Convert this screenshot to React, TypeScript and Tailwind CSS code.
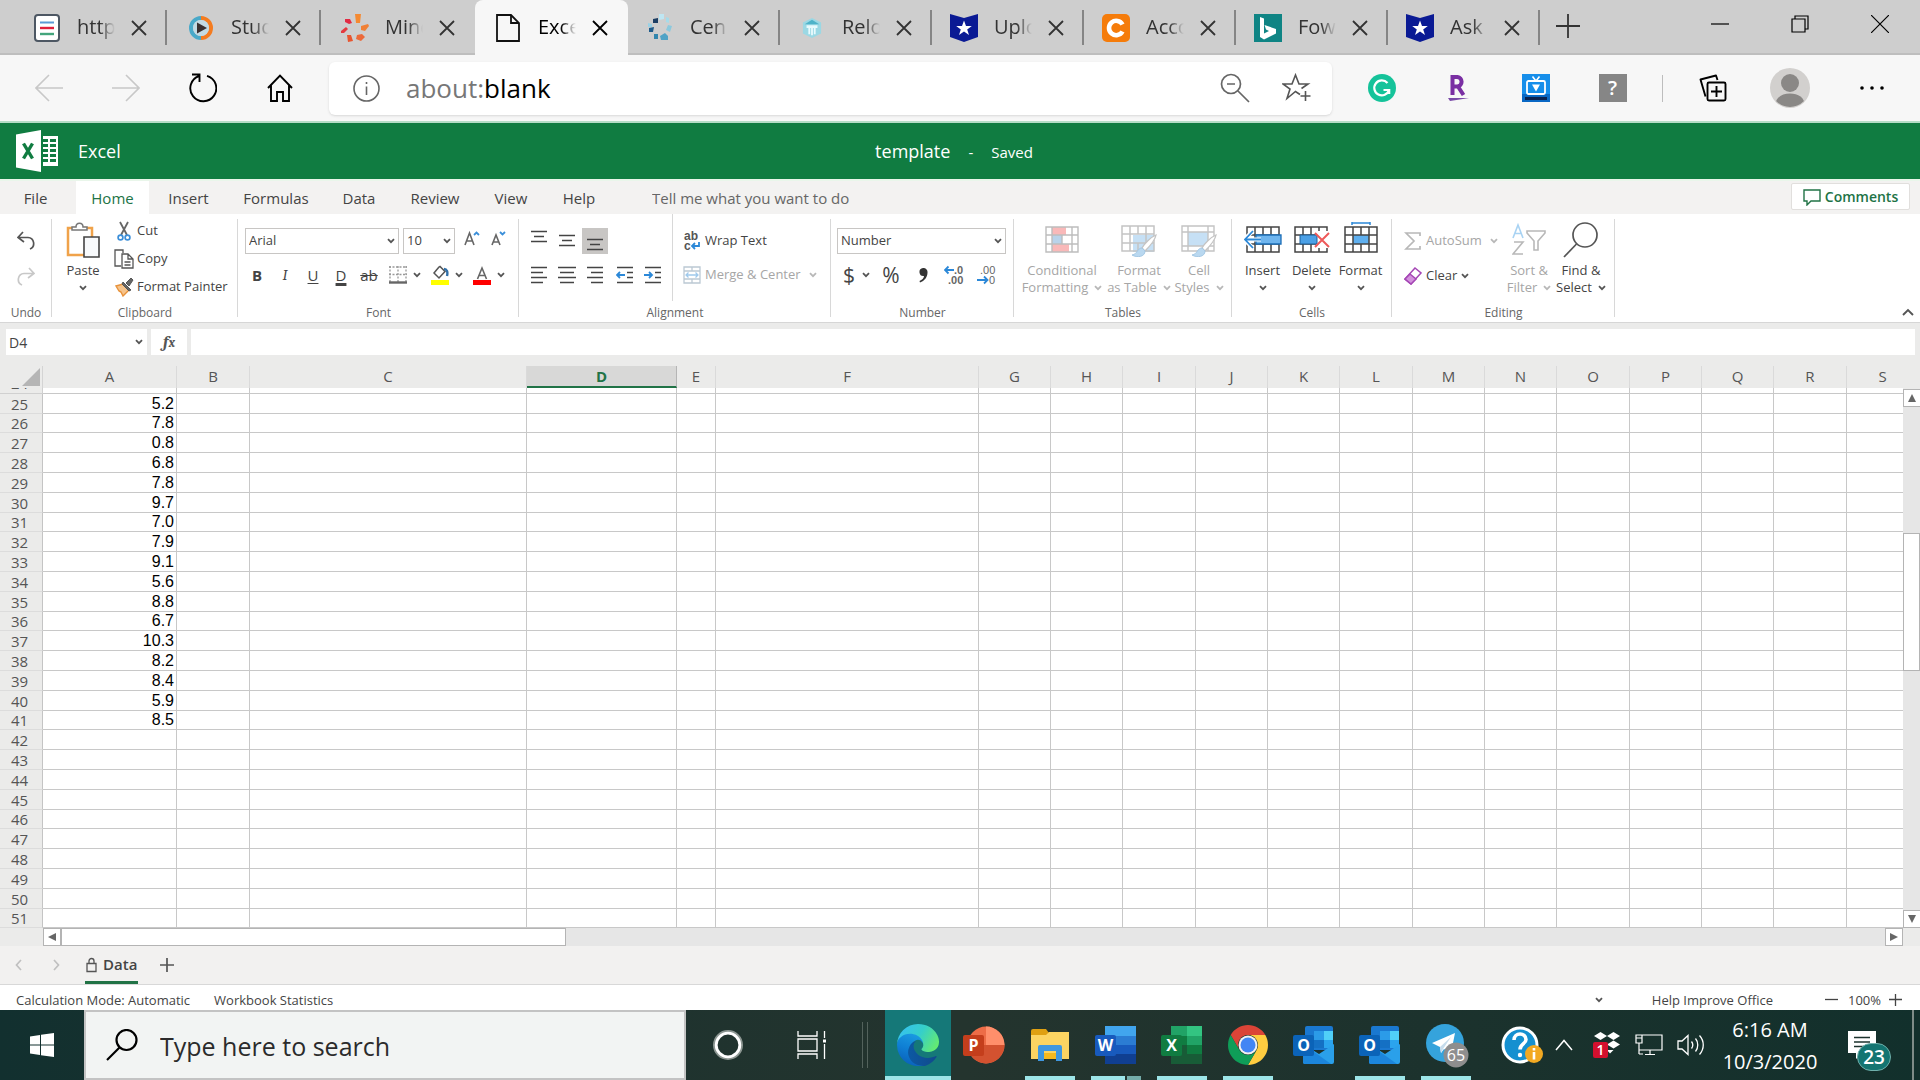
import type { ReactNode } from 'react';
import clsx from 'clsx';

/* ---------- shared bits ---------- */

function Chevron({ color = '#555' }: { color?: string }) {
  return (
    <svg width="8" height="6" viewBox="0 0 8 6" fill="none" stroke={color} strokeWidth="1.8" className="shrink-0">
      <path d="M1 1.2 4 4.2 7 1.2" />
    </svg>
  );
}

function CloseX() {
  return (
    <svg width="16" height="16" viewBox="0 0 16 16" stroke="currentColor" strokeWidth="1.8" fill="none">
      <path d="M1 1 15 15M15 1 1 15" />
    </svg>
  );
}

/* ---------- browser tabs ---------- */

function ShieldStar() {
  return (
    <svg width="28" height="28" viewBox="0 0 28 28">
      <path d="M0 0 14 4 28 0V23L14 28 0 23Z" fill="#0a1a94" />
      <path d="M14 6.500l2 5.500h5.800l-4.600 3.400 1.800 5.600-5-3.400-5 3.400 1.800-5.600L6.200 12H12Z" fill="#fff" />
    </svg>
  );
}

const browserTabs: { title: string; width: string; icon: ReactNode; active?: boolean; plain?: boolean }[] = [
  {
    title: 'http',
    width: 'w-[154px] pl-5',
    icon: (
      <svg width="26" height="28" viewBox="0 0 26 28">
        <rect x="1" y="1" width="24" height="26" rx="3" fill="#fff" stroke="#4d5763" strokeWidth="2" />
        <path d="M6 8.500H20" stroke="#5b9bd5" strokeWidth="2" />
        <path d="M6 14H20" stroke="#e0203c" strokeWidth="2.400" />
        <path d="M6 20H20" stroke="#43a57c" strokeWidth="2.400" />
      </svg>
    ),
  },
  {
    title: 'Stud',
    width: 'w-[154px] pl-5',
    icon: (
      <svg width="26" height="28" viewBox="0 0 26 28">
        <path d="M13 4a10 10 0 0 0 0 20" fill="none" stroke="#49a9c9" strokeWidth="4" />
        <path d="M13 4a10 10 0 0 1 0 20" fill="none" stroke="#f47c20" strokeWidth="4" />
        <circle cx="13" cy="14" r="8" fill="#c3dbe4" />
        <path d="M9 8.500 19 14 9 19.500Z" fill="#3a3030" />
      </svg>
    ),
  },
  {
    title: 'Mind',
    width: 'w-[154px] pl-5',
    plain: true,
    icon: (
      <svg width="28" height="28" viewBox="0 0 28 28">
        <path d="M14 0h6l-1 9h-4Z" fill="#f58a32" />
        <path d="M20 12l7-2 1 2-4 5-4-1Z" fill="#f08035" />
        <path d="M16 21l5-1 3 3-4 4-5-2Z" fill="#ec6a3a" />
        <path d="M6 21h4l2 6-5 1Z" fill="#e8552f" />
        <path d="M0 17l5-4 2 2-4 4H0Z" fill="#e33a40" />
        <path d="M4 5l5 0 2 4-3 1-4-2Z" fill="#e22b44" />
      </svg>
    ),
  },
  {
    title: 'Exce',
    width: 'w-[153px] pl-[19px]',
    active: true,
    plain: true,
    icon: (
      <svg width="24" height="28" viewBox="0 0 24 28" fill="none" stroke="#111" strokeWidth="1.800">
        <path d="M1 1h14l8 8v18H1Z" />
        <path d="M15 1v8h8" />
      </svg>
    ),
  },
  {
    title: 'Cen',
    width: 'w-[152px] pl-[18px]',
    icon: (
      <svg width="26" height="28" viewBox="0 0 26 28">
        <path d="M12 0h5v5l-5 1Z" fill="#bfe6f2" />
        <path d="M19 3l3 1v5l-3-1Z" fill="#a6dbe9" />
        <path d="M6 5l5-1v5H6Z" fill="#1d3e63" />
        <path d="M21 11l4 1-2 6-4-2Z" fill="#8cc9dd" />
        <path d="M1 9l4 1v3H1Z" fill="#9ad2e6" />
        <path d="M2 14l5-1-1 5H2Z" fill="#1f5b8a" />
        <path d="M7 20h4v5H7Z" fill="#3286ad" />
        <path d="M13 22l5-3 3 3v4h-7Z" fill="#4fa3c6" />
      </svg>
    ),
  },
  {
    title: 'Relo',
    width: 'w-[152px] pl-[18px]',
    icon: (
      <svg width="20" height="22" viewBox="0 0 22 24">
        <path d="M11 1 21 6v12l-10 5L1 18V6Z" fill="#9bd8e4" />
        <path d="M11 3 19 8H3Z" fill="#4fb3c9" />
        <path d="M5 9h12v3H5Z" fill="#e9fafd" />
        <path d="M7 12h2v7H7Zm3 0h2v8h-2Zm3 0h2v7h-2Z" fill="#e9fafd" />
      </svg>
    ),
  },
  { title: 'Uplo', width: 'w-[152px] pl-[18px]', icon: <ShieldStar /> },
  {
    title: 'Acco',
    width: 'w-[152px] pl-[18px]',
    icon: (
      <svg width="28" height="28" viewBox="0 0 28 28">
        <rect width="28" height="28" rx="5" fill="#f57c0b" />
        <path d="M20.500 10.500A7.200 7.200 0 1 0 20.500 17.500" fill="none" stroke="#fff" strokeWidth="4.600" />
      </svg>
    ),
  },
  {
    title: 'Fow',
    width: 'w-[152px] pl-[18px]',
    icon: (
      <svg width="28" height="28" viewBox="0 0 28 28">
        <rect width="28" height="28" fill="#0f8484" />
        <path d="M6 3l4 1.500v15L15 17l-3-1.500-1.500-4.500L22 15v4.500L10 25.500 6 23Z" fill="#fff" />
      </svg>
    ),
  },
  { title: 'Ask', width: 'w-[152px] pl-[18px]', icon: <ShieldStar /> },
];

function BrowserTabs() {
  return (
    <div className="flex h-[55px] border-b-2 border-[#bebebe] bg-[#cecece] pl-[13px]">
      {browserTabs.map((tab, i) => (
        <div
          key={i}
          className={clsx(
            'relative flex h-[55px] shrink-0 items-center',
            tab.width,
            tab.active ? 'rounded-t-lg bg-[#f7f7f7] text-black' : 'text-[#333]',
          )}
        >
          <span className="flex w-7 justify-center">{tab.icon}</span>
          <span className="ml-4 w-[38px] overflow-hidden pb-[2px] text-[20px] leading-7 whitespace-nowrap mask-r-from-60%">
            {tab.title}
          </span>
          <button type="button" aria-label={`Close ${tab.title}`} className="ml-4">
            <CloseX />
          </button>
          {!tab.plain && <span className="absolute top-[10px] right-0 h-[35px] w-[2px] bg-[#858585]" />}
        </div>
      ))}
      <button type="button" aria-label="New tab" className="ml-4 flex h-[51px] items-center">
        <svg width="24" height="24" viewBox="0 0 24 24" stroke="#333" strokeWidth="1.800">
          <path d="M12 0V24M0 12H24" />
        </svg>
      </button>
      <div className="ml-auto flex h-[47px]">
        <button type="button" aria-label="Minimize" className="flex w-20 items-center justify-center">
          <svg width="18" height="18" viewBox="0 0 18 18" stroke="#000" strokeWidth="1.200">
            <path d="M0 9H18" />
          </svg>
        </button>
        <button type="button" aria-label="Restore" className="flex w-20 items-center justify-center">
          <svg width="18" height="18" viewBox="0 0 18 18" stroke="#000" strokeWidth="1.200" fill="none">
            <path d="M1 4h13v13H1ZM4 4V1h13v13h-3" />
          </svg>
        </button>
        <button type="button" aria-label="Close window" className="flex w-20 items-center justify-center">
          <svg width="18" height="18" viewBox="0 0 18 18" stroke="#000" strokeWidth="1.200">
            <path d="M0 0 18 18M18 0 0 18" />
          </svg>
        </button>
      </div>
    </div>
  );
}

/* ---------- address bar ---------- */

function ToolButton({ label, children }: { label: string; children: ReactNode }) {
  return (
    <button type="button" aria-label={label} className="flex w-[77px] shrink-0 items-center justify-center">
      {children}
    </button>
  );
}

function AddressBar() {
  return (
    <div className="flex h-[66px] items-center bg-[#f7f7f7] px-[10px]">
      <ToolButton label="Back">
        <svg width="28" height="28" viewBox="0 0 28 28" fill="none" stroke="#c8c8c8" strokeWidth="1.600">
          <path d="M28 14H1M14 1 1 14 14 27" />
        </svg>
      </ToolButton>
      <ToolButton label="Forward">
        <svg width="28" height="28" viewBox="0 0 28 28" fill="none" stroke="#c8c8c8" strokeWidth="1.600">
          <path d="M0 14H27M14 1 27 14 14 27" />
        </svg>
      </ToolButton>
      <ToolButton label="Refresh">
        <svg width="28" height="30" viewBox="0 0 28 30" fill="none" stroke="#000" strokeWidth="1.900">
          <path d="M18 2.800A13 13 0 1 1 10 3M3 1.500H10.500V9" />
        </svg>
      </ToolButton>
      <ToolButton label="Home">
        <svg width="26" height="28" viewBox="0 0 26 28" fill="none" stroke="#000" strokeWidth="1.900">
          <path d="M1 14 13 1.500 25 14M4 11V27H10V18H16V27H22V11" />
        </svg>
      </ToolButton>

      <div className="ml-[11px] flex h-[53px] flex-1 items-center rounded-md bg-white pr-5 pl-6 shadow-sm">
        <svg width="27" height="27" viewBox="0 0 27 27" fill="none" stroke="#666" strokeWidth="1.600">
          <circle cx="13.500" cy="13.500" r="12.500" />
          <path d="M13.500 11.500V20M13.500 7V9" />
        </svg>
        <label htmlFor="url" className="ml-[26px] text-[26px] text-[#777]">
          about:
        </label>
        <input id="url" defaultValue="blank" className="min-w-0 flex-1 text-[26px] text-black outline-none" />
        <button type="button" aria-label="Zoom out">
          <svg width="30" height="30" viewBox="0 0 30 30" fill="none" stroke="#666" strokeWidth="1.700">
            <circle cx="11" cy="11" r="9.500" />
            <path d="M7 11H15M18 18 29 29" />
          </svg>
        </button>
        <button type="button" aria-label="Add to favorites" className="ml-8">
          <svg width="30" height="30" viewBox="0 0 30 30" fill="none" stroke="#555" strokeWidth="1.600">
            <path d="M18 21.500 13.500 18.500 5 25.500 8 16 1 11H10L13.500 2 17 11H26L19.500 15.500" />
            <path d="M23.500 18V28M18.500 23H28.500" />
          </svg>
        </button>
      </div>

      <div className="ml-[11px] flex items-center">
        <ToolButton label="Grammarly">
          <svg width="28" height="28" viewBox="0 0 28 28">
            <circle cx="14" cy="14" r="14" fill="#15c39a" />
            <path d="M19.500 9A7.500 7.500 0 1 0 21 16H15.500M21.200 15V20" fill="none" stroke="#fff" strokeWidth="2.200" />
          </svg>
        </ToolButton>
        <ToolButton label="Rakuten">
          <svg width="24" height="28" viewBox="0 0 24 28">
            <path d="M5.500 21V3H10.500A4.800 4.800 0 0 1 10.500 12.500H6M11 12.500 16.500 21" fill="none" stroke="#7a2fa3" strokeWidth="4" />
            <path d="M1 24H22L16 25 3 27Z" fill="#7a4aa8" />
          </svg>
        </ToolButton>
        <ToolButton label="Video downloader">
          <svg width="28" height="28" viewBox="0 0 28 28">
            <rect width="28" height="28" fill="#168eea" />
            <path d="M0 20H28V28H0Z" fill="#0a68c4" />
            <rect x="5" y="7" width="18" height="13" rx="1.500" fill="none" stroke="#fff" strokeWidth="1.800" />
            <path d="M14 7 10.500 2.500M14 7 17.500 2.500" stroke="#fff" strokeWidth="1.600" />
            <path d="M10 10.500H18L14 17.500Z" fill="#fff" />
            <path d="M3 23H25V26H3Z" fill="#0b2350" />
          </svg>
        </ToolButton>
        <ToolButton label="Extension">
          <span className="flex h-7 w-7 items-center justify-center bg-[#868686] text-[20px] leading-7 font-semibold text-white">
            ?
          </span>
        </ToolButton>
        <span className="mx-[11px] h-[27px] w-px bg-[#bdbdbd]" />
        <ToolButton label="Collections">
          <svg width="28" height="28" viewBox="0 0 28 28" fill="none" stroke="#000" strokeWidth="1.900" strokeLinejoin="round">
            <rect x="8.500" y="8.500" width="18" height="18" rx="1.500" />
            <path d="M17.500 12V23M12 17.500H23M6.500 22.500 1.500 5.500 17 1.500 18.500 6" />
          </svg>
        </ToolButton>
        <ToolButton label="Profile">
          <svg width="40" height="40" viewBox="0 0 40 40">
            <clipPath id="avatar-clip">
              <circle cx="20" cy="20" r="19" />
            </clipPath>
            <circle cx="20" cy="20" r="20" fill="#d2d0ce" />
            <g clipPath="url(#avatar-clip)" fill="#8a8886">
              <circle cx="20" cy="15" r="9" />
              <path d="M5 39C5 29 12 25.500 20 25.500S35 29 35 39Z" />
            </g>
          </svg>
        </ToolButton>
        <span className="w-[5px]" />
        <ToolButton label="Settings and more">
          <svg width="26" height="6" viewBox="0 0 26 6">
            <circle cx="3" cy="3" r="1.800" />
            <circle cx="13" cy="3" r="1.800" />
            <circle cx="23" cy="3" r="1.800" />
          </svg>
        </ToolButton>
      </div>
    </div>
  );
}

/* ---------- Excel header ---------- */

function ExcelHeader() {
  return (
    <header className="grid h-[58px] grid-cols-3 items-center border-t-2 border-[#b5dcc6] bg-[#107c41] text-white">
      <div className="flex items-center gap-5 pl-4">
        <svg width="42" height="42" viewBox="0 0 42 42">
          <path d="M0 4.500 25 0V42L0 37.500Z" fill="#fff" />
          <path d="M27 6H42V36H27Z" fill="#fff" />
          <path
            d="M26 10.500H32M34 10.500H40M26 15.500H32M34 15.500H40M26 20.500H32M34 20.500H40M26 25.500H32M34 25.500H40M26 30.500H32M34 30.500H40"
            stroke="#107c41"
            strokeWidth="3"
          />
          <path d="M7.500 13.500 16.500 28.500M16.500 13.500 7.500 28.500" stroke="#107c41" strokeWidth="3.400" />
        </svg>
        <span className="text-[18px] font-medium">Excel</span>
      </div>
      <div className="flex items-baseline justify-center gap-[18px] pr-3">
        <span className="text-[18px] font-medium">template</span>
        <span className="text-[15px]">-</span>
        <span className="text-[15px] font-medium">Saved</span>
      </div>
    </header>
  );
}

const ribbonTabs = [
  { name: 'File', width: 'w-[71px]' },
  { name: 'Home', width: 'w-[73px]' },
  { name: 'Insert', width: 'w-[79px]' },
  { name: 'Formulas', width: 'w-[96px]' },
  { name: 'Data', width: 'w-[70px]' },
  { name: 'Review', width: 'w-[82px]' },
  { name: 'View', width: 'w-[70px]' },
  { name: 'Help', width: 'w-[66px]' },
];

function RibbonTabs() {
  return (
    <nav className="flex h-[35px] items-stretch border-t-2 border-[#e9f6ea] bg-[#f3f2f1] pr-[10px] text-[15px] text-[#444]">
      {ribbonTabs.map((t, i) => (
        <a
          key={t.name}
          href="#"
          className={clsx(
            'flex items-center justify-center pt-px',
            t.width,
            i === 1 && 'bg-white text-[#217346]',
            i === 0 && 'mr-[5px]',
          )}
        >
          {t.name}
        </a>
      ))}
      <input
        aria-label="Tell me what you want to do"
        placeholder="Tell me what you want to do"
        className="ml-10 w-[260px] pt-px outline-none placeholder:text-[#666]"
      />
      <button
        type="button"
        className="mt-[2px] ml-auto flex h-[27px] w-[119px] items-center justify-center gap-1 rounded-xs border border-[#e1dfdd] bg-white font-semibold text-[#217346]"
      >
        <svg width="18" height="18" viewBox="0 0 18 18" fill="none" stroke="#217346" strokeWidth="1.400">
          <path d="M1 2H17V13H8L4 17V13H1Z" />
        </svg>
        <span className="text-[14px]">Comments</span>
      </button>
    </nav>
  );
}

/* ---------- ribbon ---------- */

function Group({ name, width, children }: { name: string; width: string; children: ReactNode }) {
  return (
    <section aria-label={name} className={clsx('relative flex shrink-0 flex-col', width)}>
      <div className="h-[90px]">{children}</div>
      <div className="text-center text-[12px] leading-[18px] text-[#666]">{name}</div>
      <span className="absolute top-[5px] right-0 h-[98px] w-px bg-[#d8d8d8]" />
    </section>
  );
}

function BigButton({ icon, line1, line2, width, disabled }: { icon: ReactNode; line1: string; line2?: string; width: string; disabled?: boolean }) {
  return (
    <button
      type="button"
      disabled={disabled}
      className={clsx('flex flex-col items-center pt-2 whitespace-nowrap', width, disabled ? 'text-[#a6a6a6]' : 'text-[#444]')}
    >
      <span className="flex h-9 items-center">{icon}</span>
      <span className="mt-1 leading-[17px]">{line1}</span>
      <span className="flex h-[17px] items-center gap-[6px] leading-[17px]">
        {line2}
        <Chevron color={disabled ? '#b8b8b8' : '#555'} />
      </span>
    </button>
  );
}

function ToolSelect({ label, value, width }: { label: string; value: string; width: string }) {
  return (
    <div className={clsx('relative h-[26px]', width)}>
      <select aria-label={label} className="h-full w-full appearance-none border border-[#c8c6c4] bg-white pl-[3px] text-[#444]">
        <option>{value}</option>
      </select>
      <span className="pointer-events-none absolute top-[10px] right-1">
        <Chevron />
      </span>
    </div>
  );
}

function LinesIcon({ d }: { d: string }) {
  return (
    <svg width="18" height="26" viewBox="0 0 18 26" fill="none" stroke="#444" strokeWidth="1.500">
      <path d={d} />
    </svg>
  );
}

function AlignButton({ label, active, children }: { label: string; active?: boolean; children: ReactNode }) {
  return (
    <button type="button" aria-label={label} className={clsx('mx-px flex h-[26px] w-[26px] justify-center', active && 'bg-[#c8c6c4]')}>
      {children}
    </button>
  );
}

function DropIcon({ label, children }: { label: string; children: ReactNode }) {
  return (
    <button type="button" aria-label={label} className="flex h-[26px] w-[42px] items-center gap-[6px]">
      {children}
      <Chevron />
    </button>
  );
}

function SheetGrid({ stroke }: { stroke: string }) {
  return <path d="M1 1H33V26H1ZM1 9H33M1 18H33M9 1V26M17 1V9M17 18V26M25 1V26" fill="none" stroke={stroke} strokeWidth="1.500" />;
}

function Brush() {
  return (
    <>
      <path d="M35 10C30 12 23 19 21 23L24 26C28 22 34 16 35 10Z" fill="#fff" stroke="#c4c4c4" strokeWidth="1.300" />
      <path d="M21 23C16 23 17 29 11 30 16 33 24 32 24 26Z" fill="#b9d8f0" stroke="#a5c8e4" />
    </>
  );
}

function Ribbon() {
  return (
    <div className="flex h-[109px] border-b border-[#d6d6d6] bg-white text-[13px] text-[#444]">
      <Group name="Undo" width="w-[52px]">
        <div className="flex flex-col items-center gap-4 pt-[17px]">
          <button type="button" aria-label="Undo">
            <svg width="18" height="20" viewBox="0 0 18 20" fill="none" stroke="#555" strokeWidth="1.700">
              <path d="M6 1 1 6.500 7 11M1 6.500H11A6 6 0 0 1 13 18" />
            </svg>
          </button>
          <button type="button" aria-label="Redo" disabled>
            <svg width="18" height="20" viewBox="0 0 18 20" fill="none" stroke="#c8c8c8" strokeWidth="1.700">
              <path d="M12 1 17 6.500 11 11M17 6.500H7A6 6 0 0 0 5 18" />
            </svg>
          </button>
        </div>
      </Group>

      <Group name="Clipboard" width="w-[186px]">
        <div className="flex">
          <BigButton
            width="w-[54px] ml-1"
            line1="Paste"
            icon={
              <svg width="34" height="36" viewBox="0 0 34 36" fill="none">
                <path d="M2 6H26V33H2Z" stroke="#f0a24a" strokeWidth="2.500" />
                <path d="M4 8H24V31H4Z" fill="#fff" />
                <path d="M6 8V5H10C10 0 17 0 17 5H21V8Z" fill="#fff" stroke="#777" strokeWidth="1.500" />
                <path d="M18 15H33V35H18Z" fill="#f8fafc" stroke="#444" strokeWidth="1.600" />
              </svg>
            }
          />
          <div className="ml-1 flex flex-col pt-[3px]">
            <button type="button" className="flex h-7 items-center gap-[3px]">
              <svg width="20" height="20" viewBox="0 0 20 20" fill="none">
                <path d="M6 1 13 14M14 1 7 14" stroke="#666" strokeWidth="1.800" />
                <circle cx="6.500" cy="16.500" r="2.400" stroke="#3c8fd9" strokeWidth="1.700" />
                <circle cx="13.500" cy="16.500" r="2.400" stroke="#3c8fd9" strokeWidth="1.700" />
              </svg>
              Cut
            </button>
            <button type="button" className="flex h-7 items-center gap-[3px]">
              <svg width="20" height="20" viewBox="0 0 20 20" fill="none" stroke="#555" strokeWidth="1.300">
                <path d="M7 17H1V1H9V4" />
                <path d="M8 5H14L19 10V19H8ZM14 5V10H19M10.500 13H16.500M10.500 16H16.500" fill="#fff" />
              </svg>
              Copy
            </button>
            <button type="button" className="flex h-7 items-center gap-[3px] whitespace-nowrap">
              <svg width="20" height="20" viewBox="0 0 20 20">
                <path d="M2 9 9 7 15 13 9 19 7 15 5 14Z" fill="#f6c48c" stroke="#e8923a" strokeWidth="1.400" />
                <path d="M9 5 17 13 15 14 8 7ZM12 6 17 1 19 3 15 9Z" fill="#666" stroke="#555" />
              </svg>
              Format Painter
            </button>
          </div>
        </div>
      </Group>

      <Group name="Font" width="w-[281px]">
        <div className="flex gap-1 pt-[14px] pl-[7px]">
          <ToolSelect label="Font name" value="Arial" width="w-[154px]" />
          <ToolSelect label="Font size" value="10" width="w-[52px]" />
          <button type="button" aria-label="Grow font" className="ml-[5px] flex">
            <svg width="17" height="20" viewBox="0 0 17 20" fill="none">
              <path d="M1 17 5.500 5 10 17M2.500 13H8.500" stroke="#666" strokeWidth="1.600" />
              <path d="M10 7 12.500 4.500 15 7" stroke="#3c8fd9" strokeWidth="1.800" />
            </svg>
          </button>
          <button type="button" aria-label="Shrink font" className="ml-[5px] flex">
            <svg width="17" height="20" viewBox="0 0 17 20" fill="none">
              <path d="M2 17 6 7 10 17M3.500 14H8.500" stroke="#666" strokeWidth="1.600" />
              <path d="M10 4 12.500 6.500 15 4" stroke="#3c8fd9" strokeWidth="1.800" />
            </svg>
          </button>
        </div>
        <div className="mt-2 flex items-center pl-[5px] text-[15px]">
          <button type="button" className="w-7 font-bold">B</button>
          <button type="button" className="w-7 font-serif italic">I</button>
          <button type="button" className="w-7 underline underline-offset-2">U</button>
          <button type="button" className="w-7 underline decoration-[3px] underline-offset-2">D</button>
          <button type="button" className="mr-[6px] w-7 line-through">ab</button>
          <DropIcon label="Borders">
            <svg width="18" height="18" viewBox="0 0 18 18" fill="none">
              <path d="M1 0V16M9 0V16M17 0V16M0 1H18M0 8.500H18" stroke="#999" strokeWidth="1.300" strokeDasharray="2 1.500" />
              <path d="M0 16.500H18" stroke="#666" strokeWidth="2.400" />
            </svg>
          </DropIcon>
          <DropIcon label="Fill color">
            <svg width="18" height="20" viewBox="0 0 18 20" fill="none">
              <path d="M8 2 3 8 8 13 14 6.500 9 1.500Z" fill="#fff" stroke="#555" strokeWidth="1.500" />
              <path d="M13 4C16 4 17 7 16 11" stroke="#2f6fa8" strokeWidth="2.400" />
              <path d="M0 15H18V20H0Z" fill="#ff0" />
            </svg>
          </DropIcon>
          <DropIcon label="Font color">
            <svg width="18" height="20" viewBox="0 0 18 20" fill="none">
              <path d="M4.500 14 9 3 13.500 14M6 10.500H12" stroke="#666" strokeWidth="1.600" />
              <path d="M0 15H18V20H0Z" fill="#f00" />
            </svg>
          </DropIcon>
        </div>
      </Group>

      <Group name="Alignment" width="w-[312px]">
        <div className="flex">
          <div className="h-[87px] w-[154px] border-r border-[#d8d8d8] pt-[14px] pl-[6px]">
            <div className="flex">
              <AlignButton label="Top align">
                <LinesIcon d="M1 3.500H17M4 8.500H14M1 13.500H17" />
              </AlignButton>
              <AlignButton label="Middle align">
                <LinesIcon d="M1 7.500H17M4 12.500H14M1 17.500H17" />
              </AlignButton>
              <AlignButton label="Bottom align" active>
                <LinesIcon d="M1 11.500H17M4 16.500H14M1 21.500H17" />
              </AlignButton>
            </div>
            <div className="mt-2 flex">
              <AlignButton label="Align left">
                <LinesIcon d="M1 5.500H17M1 10.500H13M1 15.500H17M1 20.500H13" />
              </AlignButton>
              <AlignButton label="Center">
                <LinesIcon d="M0 5.500H18M2 10.500H16M0 15.500H18M2 20.500H16" />
              </AlignButton>
              <AlignButton label="Align right">
                <LinesIcon d="M1 5.500H17M5 10.500H17M1 15.500H17M5 20.500H17" />
              </AlignButton>
              <span className="w-[2px]" />
              <AlignButton label="Decrease indent">
                <svg width="18" height="26" viewBox="0 0 18 26" fill="none" strokeWidth="1.500">
                  <path d="M1 5.500H17M11 10.500H17M11 15.500H17M1 20.500H17" stroke="#444" />
                  <path d="M9 13H1M4 10 1 13 4 16" stroke="#2b88d8" strokeWidth="1.800" />
                </svg>
              </AlignButton>
              <AlignButton label="Increase indent">
                <svg width="18" height="26" viewBox="0 0 18 26" fill="none" strokeWidth="1.500">
                  <path d="M1 5.500H17M11 10.500H17M11 15.500H17M1 20.500H17" stroke="#444" />
                  <path d="M0 13H8M5 10 8 13 5 16" stroke="#2b88d8" strokeWidth="1.800" />
                </svg>
              </AlignButton>
            </div>
          </div>
          <div className="flex flex-col gap-2 pt-[14px] pl-[10px]">
            <button type="button" className="flex h-[26px] items-center gap-1">
              <svg width="18" height="20" viewBox="0 0 18 20" fill="none" className="font-['Liberation_Sans',sans-serif]">
                <text x="1" y="9" fontSize="12" fontWeight="700" fill="#555">ab</text>
                <text x="1" y="19" fontSize="12" fontWeight="700" fill="#555">c</text>
                <path d="M16 11V15H9M12 12 9 15 12 18" stroke="#2b88d8" strokeWidth="1.800" />
              </svg>
              Wrap Text
            </button>
            <button type="button" disabled className="flex h-[26px] items-center gap-1 whitespace-nowrap text-[#a6a6a6]">
              <svg width="18" height="18" viewBox="0 0 18 18" fill="none" stroke="#bcc9d4" strokeWidth="1.300">
                <path d="M1 1H17V17H1ZM1 5H17M1 13H17M9 1V5M9 13V17" />
                <path d="M3 9H15M5.500 6.500 3 9 5.500 11.500M12.500 6.500 15 9 12.500 11.500" stroke="#9fc9ec" />
              </svg>
              Merge &amp; Center
              <span className="ml-1">
                <Chevron color="#b8b8b8" />
              </span>
            </button>
          </div>
        </div>
      </Group>

      <Group name="Number" width="w-[183px]">
        <div className="pt-[14px] pl-[6px]">
          <ToolSelect label="Number format" value="Number" width="w-[169px]" />
          <div className="mt-2 flex h-[26px] items-center text-[21px] leading-[26px]">
            <button type="button" aria-label="Accounting format" className="flex w-10 items-center gap-[7px] pl-[6px]">
              $ <Chevron />
            </button>
            <button type="button" className="w-[28px]">%</button>
            <button type="button" aria-label="Comma style" className="flex w-9 justify-center">
              <svg width="10" height="18" viewBox="0 0 10 18">
                <path d="M5 2A4 4 0 0 1 9.500 6.500C9.500 11 6.500 15 2 16.500L1.500 15C4 14 6 12 6 10A4 4 0 1 1 5 2Z" fill="#333" />
              </svg>
            </button>
            <button type="button" aria-label="Increase decimal" className="flex w-[26px] justify-center">
              <svg width="20" height="20" viewBox="0 0 20 20" fill="none" className="font-['Liberation_Sans',sans-serif]">
                <text x="10" y="9" fontSize="11" fontWeight="700" fill="#666">.0</text>
                <text x="4" y="19" fontSize="11" fontWeight="700" fill="#666">.00</text>
                <path d="M10 5H1M4.500 1.500 1 5 4.500 8.500" stroke="#2b88d8" strokeWidth="1.800" />
              </svg>
            </button>
            <button type="button" aria-label="Decrease decimal" className="ml-[6px] flex w-[26px] justify-center">
              <svg width="20" height="20" viewBox="0 0 20 20" fill="none" className="font-['Liberation_Sans',sans-serif]">
                <text x="4" y="9" fontSize="11" fill="#666">.00</text>
                <text x="13" y="19" fontSize="11" fill="#666">0</text>
                <path d="M1 15H11M8 11.500 11.500 15 8 18.500" stroke="#2b88d8" strokeWidth="1.800" />
              </svg>
            </button>
          </div>
        </div>
      </Group>

      <Group name="Tables" width="w-[218px]">
        <div className="flex pl-[7px]">
          <BigButton
            width="w-[82px]"
            line1="Conditional"
            line2="Formatting"
            disabled
            icon={
              <svg width="34" height="28" viewBox="0 0 34 28">
                <path d="M7 1H21V9H7ZM7 18H24V26H7Z" fill="#f9b9b9" />
                <path d="M7 9H17V18H7Z" fill="#b9d3ea" />
                <path d="M1 1H33V26H1ZM1 9H33M1 18H33M7 1V26M27 1V26M17 9V18" fill="none" stroke="#bdbdbd" strokeWidth="1.400" />
              </svg>
            }
          />
          <BigButton
            width="w-[66px] ml-[3px]"
            line1="Format"
            line2="as Table"
            disabled
            icon={
              <svg width="36" height="34" viewBox="0 -2 36 34">
                <path d="M12 10H33V27H12Z" fill="#c6e0f5" />
                <SheetGrid stroke="#c4c4c4" />
                <Brush />
              </svg>
            }
          />
          <BigButton
            width="w-[50px] ml-[2px]"
            line1="Cell"
            line2="Styles"
            disabled
            icon={
              <svg width="36" height="34" viewBox="0 -2 36 34">
                <path d="M7 7H27V21H7Z" fill="#c6e0f5" />
                <path d="M1 1H33V26H1ZM1 7H33M7 1V26M27 1V26M1 21H33" fill="none" stroke="#c4c4c4" strokeWidth="1.400" />
                <Brush />
              </svg>
            }
          />
        </div>
      </Group>

      <Group name="Cells" width="w-[160px]">
        <div className="flex pl-[6px]">
          <BigButton
            width="w-[49px]"
            line1="Insert"
            icon={
              <svg width="38" height="28" viewBox="0 0 38 28">
                <g transform="translate(2 0)">
                  <SheetGrid stroke="#444" />
                </g>
                <path d="M12 9H37V18H12Z" fill="#6fb5ee" stroke="#1d6fb8" strokeWidth="1.300" />
                <path d="M0 13.500H17M9 5 0 13.500 9 22" fill="none" stroke="#fff" strokeWidth="4" />
                <path d="M1 13.500H17M9 5 1 13.500 9 22" fill="none" stroke="#2b88d8" strokeWidth="1.800" />
              </svg>
            }
          />
          <BigButton
            width="w-[49px]"
            line1="Delete"
            icon={
              <svg width="36" height="28" viewBox="0 0 36 28">
                <SheetGrid stroke="#444" />
                <path d="M22 5H34V22H22Z" fill="#fff" />
                <path d="M6 9H23V18H6Z" fill="#4ba0e6" stroke="#1d5f98" />
                <path d="M21 7 35 21M35 7 21 21" stroke="#ee5a5a" strokeWidth="2" />
              </svg>
            }
          />
          <BigButton
            width="w-[49px]"
            line1="Format"
            icon={
              <svg width="34" height="36" viewBox="0 1 34 36">
                <path d="M8 2H26M8 0V4M26 0V4" stroke="#2b88d8" strokeWidth="1.500" />
                <g transform="translate(0 5)">
                  <path d="M9 9H25V18H9Z" fill="#5fb0f0" />
                  <SheetGrid stroke="#444" />
                </g>
              </svg>
            }
          />
        </div>
      </Group>

      <Group name="Editing" width="w-[223px]">
        <div className="flex">
          <div className="flex w-[111px] flex-col gap-[9px] pt-[14px] pl-3">
            <button type="button" disabled className="flex h-[26px] items-center gap-1 text-[#a6a6a6]">
              <svg width="18" height="18" viewBox="0 0 18 18" fill="none" stroke="#b8b8b8" strokeWidth="1.700">
                <path d="M16 4V1H2L10 9 2 17H16V14" />
              </svg>
              AutoSum
              <span className="ml-1">
                <Chevron color="#b8b8b8" />
              </span>
            </button>
            <button type="button" className="flex h-[26px] items-center gap-1">
              <svg width="18" height="18" viewBox="0 0 18 18" stroke="#a546b5" strokeWidth="1.500">
                <path d="M11 1 17 6 7 17 1 12Z" fill="#fff" />
                <path d="M6 7 12 12 7 17 1 12Z" fill="#d391dd" />
              </svg>
              Clear
              <Chevron />
            </button>
          </div>
          <BigButton
            width="w-[52px]"
            line1="Sort &"
            line2="Filter"
            disabled
            icon={
              <svg width="34" height="34" viewBox="0 0 34 34" fill="none" strokeWidth="1.600">
                <path d="M1 15 6 2 11 15M3 10.500H9" stroke="#a9d3f3" />
                <path d="M2 19H11L1 31H11" stroke="#b8b8b8" />
                <path d="M15 8H33V10L26 18V27H22V18L15 10Z" stroke="#b8b8b8" />
              </svg>
            }
          />
          <BigButton
            width="w-[52px]"
            line1="Find &"
            line2="Select"
            icon={
              <svg width="36" height="36" viewBox="0 0 36 36" fill="none" stroke="#555" strokeWidth="1.700">
                <circle cx="22" cy="13" r="12" />
                <path d="M13.500 22 1 35" />
              </svg>
            }
          />
        </div>
      </Group>

      <button type="button" aria-label="Collapse ribbon" className="mr-[6px] mb-[6px] ml-auto self-end">
        <svg width="12" height="8" viewBox="0 0 12 8" fill="none" stroke="#555" strokeWidth="1.900">
          <path d="M1 7 6 2 11 7" />
        </svg>
      </button>
    </div>
  );
}

/* ---------- formula bar ---------- */

function FormulaBar() {
  return (
    <div className="flex h-[43px] items-start gap-1 bg-[#ebebea] pt-[6px] pr-[5px] pl-[6px] text-[14px] text-[#444]">
      <div className="flex h-[26px] w-[141px] items-center bg-white pr-1 pl-[3px]">
        <input aria-label="Name box" defaultValue="D4" className="min-w-0 flex-1 outline-none" />
        <Chevron />
      </div>
      <button type="button" aria-label="Insert function" className="h-[26px] w-9 bg-white font-serif text-[17px] leading-6 font-bold text-[#555] italic">
        f<span className="text-[13px]">x</span>
      </button>
      <input aria-label="Formula" className="h-[26px] min-w-0 flex-1 bg-white outline-none" />
    </div>
  );
}

/* ---------- sheet ---------- */

const columns = [
  { name: 'A', width: 'w-[134px]' },
  { name: 'B', width: 'w-[73px]' },
  { name: 'C', width: 'w-[277px]' },
  { name: 'D', width: 'w-[150px]' },
  { name: 'E', width: 'w-[39px]' },
  { name: 'F', width: 'w-[263px]' },
  { name: 'G', width: 'w-[72px]' },
  { name: 'H', width: 'w-[72px]' },
  { name: 'I', width: 'w-[73px]' },
  { name: 'J', width: 'w-[72px]' },
  { name: 'K', width: 'w-[72px]' },
  { name: 'L', width: 'w-[73px]' },
  { name: 'M', width: 'w-[72px]' },
  { name: 'N', width: 'w-[72px]' },
  { name: 'O', width: 'w-[73px]' },
  { name: 'P', width: 'w-[72px]' },
  { name: 'Q', width: 'w-[72px]' },
  { name: 'R', width: 'w-[73px]' },
  { name: 'S', width: 'w-[72px]' },
];

const dataA = ['5.2', '7.8', '0.8', '6.8', '7.8', '9.7', '7.0', '7.9', '9.1', '5.6', '8.8', '6.7', '10.3', '8.2', '8.4', '5.9', '8.5'];
const rows = Array.from({ length: 27 }, (_, i) => ({ n: 25 + i, value: dataA[i] ?? '' }));

function ScrollButton({ label, d }: { label: string; d: string }) {
  return (
    <button type="button" aria-label={label} className="flex h-[18px] w-[18px] shrink-0 items-center justify-center border border-[#b4b4b4] bg-white">
      <svg width="10" height="10" viewBox="0 0 10 10" fill="#666">
        <path d={d} />
      </svg>
    </button>
  );
}

function Sheet() {
  return (
    <div className="bg-[#ebebea]">
      <div className="flex">
        <div className="min-w-0 flex-1 overflow-hidden">
          <table className="w-max table-fixed border-separate border-spacing-0">
            <thead>
              <tr className="h-[22px] text-[15px] leading-[18px] text-[#555]">
                <th className="w-[43px] border-r border-[#d4d4d4] p-0" aria-label="Select all">
                  <svg width="18" height="18" viewBox="0 0 18 18" className="ml-[22px]">
                    <path d="M18 0V18H0Z" fill="#b5b5b5" />
                  </svg>
                </th>
                {columns.map((c) => (
                  <th
                    key={c.name}
                    scope="col"
                    className={clsx(
                      'border-r p-0',
                      c.width,
                      c.name === 'D'
                        ? 'border-b-2 border-r-[#b5b5b5] border-b-[#217346] bg-[#d8d8d7] font-bold text-[#217346]'
                        : 'border-[#dadada] pb-[2px] font-normal',
                    )}
                  >
                    {c.name}
                  </th>
                ))}
              </tr>
            </thead>
            <tbody className="bg-white">
              <tr>
                <th scope="row" className="border-r border-b border-[#d0d0d0] bg-[#ebebea] p-0 font-normal text-[#555]">
                  <div className="flex h-[5px] items-end justify-center overflow-hidden pr-[3px] text-[15px] leading-[20px]">24</div>
                </th>
                {columns.map((c) => (
                  <td key={c.name} className="border-r border-b border-[#c8c8c8] p-0" />
                ))}
              </tr>
              {rows.map((r) => (
                <tr key={r.n} className={r.n % 5 === 1 ? 'h-[19px]' : 'h-[20px]'}>
                  <th
                    scope="row"
                    className="border-r border-b border-r-[#c4c4c4] border-b-[#dcdcdc] bg-[#ebebea] p-0 pr-[3px] text-[15px] leading-[18px] font-normal text-[#555]"
                  >
                    {r.n}
                  </th>
                  {columns.map((c) => (
                    <td
                      key={c.name}
                      className="border-r border-b border-[#c8c8c8] p-0 pr-[2px] text-right font-['Liberation_Sans',sans-serif] text-[16px] leading-[18px] text-black"
                    >
                      {c.name === 'A' ? r.value : null}
                    </td>
                  ))}
                </tr>
              ))}
            </tbody>
          </table>
        </div>
        <div className="mt-[23px] flex w-[17px] shrink-0 flex-col overflow-hidden bg-[#e6e6e6]">
          <ScrollButton label="Scroll up" d="M5 1 9 9H1Z" />
          <div className="mt-[126px] h-[138px] border border-[#b4b4b4] bg-white" />
          <div className="mt-auto">
            <ScrollButton label="Scroll down" d="M1 1H9L5 9Z" />
          </div>
        </div>
      </div>
      <div className="mr-[17px] ml-[43px] flex h-[18px] bg-[#e6e6e6]">
        <ScrollButton label="Scroll left" d="M9 1V9L1 5Z" />
        <div className="w-[505px] border border-[#b4b4b4] bg-white" />
        <div className="ml-auto">
          <ScrollButton label="Scroll right" d="M1 1 9 5 1 9Z" />
        </div>
      </div>
    </div>
  );
}

function SheetTabs() {
  return (
    <div className="flex h-[39px] items-stretch border-b border-[#d8d8d8] bg-[#f2f1f0] pl-[15px]">
      <button type="button" aria-label="Previous sheet" className="flex items-center">
        <svg width="8" height="12" viewBox="0 0 8 12" fill="none" stroke="#c0c0c0" strokeWidth="1.700">
          <path d="M6 1 1.500 6 6 11" />
        </svg>
      </button>
      <button type="button" aria-label="Next sheet" className="ml-[29px] flex items-center">
        <svg width="8" height="12" viewBox="0 0 8 12" fill="none" stroke="#c0c0c0" strokeWidth="1.700">
          <path d="M2 1 6.500 6 2 11" />
        </svg>
      </button>
      <button type="button" className="ml-[25px] flex h-[38px] items-center gap-[6px] border-b-3 border-[#217346] px-px pt-[2px] text-[15px] font-semibold text-[#444]">
        <svg width="11" height="16" viewBox="0 0 11 16" fill="none" stroke="#555" strokeWidth="1.300">
          <path d="M1 6.500H10V14.500H1ZM3 6.500V4A2.500 2.500 0 0 1 8 4V6.500" />
        </svg>
        Data
      </button>
      <button type="button" aria-label="New sheet" className="ml-[22px] flex items-center">
        <svg width="14" height="14" viewBox="0 0 14 14" stroke="#555" strokeWidth="1.700">
          <path d="M7 0V14M0 7H14" />
        </svg>
      </button>
    </div>
  );
}

function StatusBar() {
  return (
    <div className="flex h-[25px] items-center bg-white pt-[5px] pr-[18px] pl-4 text-[13px] leading-5 text-[#444]">
      <span>Calculation Mode: Automatic</span>
      <span className="ml-6">Workbook Statistics</span>
      <span className="ml-auto">
        <Chevron />
      </span>
      <a href="#" className="ml-[49px]">Help Improve Office</a>
      <button type="button" aria-label="Zoom out sheet" className="ml-[52px]">
        <svg width="13" height="13" viewBox="0 0 13 13" stroke="#444" strokeWidth="1.300">
          <path d="M0 5.500H13" />
        </svg>
      </button>
      <span className="ml-[10px]">100%</span>
      <button type="button" aria-label="Zoom in sheet" className="ml-2">
        <svg width="13" height="13" viewBox="0 0 13 13" stroke="#444" strokeWidth="1.300">
          <path d="M0 5.500H13M6.500 0V12" />
        </svg>
      </button>
    </div>
  );
}

/* ---------- taskbar ---------- */

function OfficeBadge({ letter, color }: { letter: string; color: string }) {
  return (
    <>
      <rect x="0" y="9" width="21" height="21" rx="2" fill={color} />
      <text x="10.500" y="25" fontSize="16" fontWeight="700" fill="#fff" textAnchor="middle">
        {letter}
      </text>
    </>
  );
}

function OutlookIcon() {
  return (
    <svg width="42" height="38" viewBox="0 0 42 38">
      <rect x="12" y="0" width="28" height="24" rx="2" fill="#1a78d0" />
      <path d="M21 5H31V14H21Z" fill="#2b9be8" />
      <path d="M31 5H40V14H31Z" fill="#50d0f8" />
      <path d="M21 14H31V22H21Z" fill="#1470c4" />
      <path d="M31 14H40V22H31Z" fill="#2ba4ee" />
      <path d="M10 18 26 28 41 18V36a2 2 0 0 1-2 2H12a2 2 0 0 1-2-2Z" fill="#2aa0ea" />
      <path d="M10 18 38 38H12a2 2 0 0 1-2-2Z" fill="#1c86dc" />
      <OfficeBadge letter="O" color="#0b63b8" />
    </svg>
  );
}

const taskApps: { name: string; icon: ReactNode; open?: boolean; active?: boolean; stacked?: boolean }[] = [
  {
    name: 'Microsoft Edge',
    active: true,
    icon: (
      <svg width="42" height="42" viewBox="4.6 4.900 256 256">
        <defs>
          <linearGradient id="edge-a" x1="0" y1="0" x2="1" y2="0">
            <stop offset="0" stopColor="#0c59a4" />
            <stop offset="1" stopColor="#114a8b" />
          </linearGradient>
          <linearGradient id="edge-b" x1="0.600" y1="0" x2="0.300" y2="1">
            <stop offset="0" stopColor="#1b9de2" />
            <stop offset="0.500" stopColor="#0f7fd4" />
            <stop offset="1" stopColor="#0a5fb8" />
          </linearGradient>
          <linearGradient id="edge-c" x1="0" y1="0.300" x2="1" y2="0.700">
            <stop offset="0" stopColor="#35c1f1" />
            <stop offset="0.500" stopColor="#36cfc9" />
            <stop offset="1" stopColor="#66eb6e" />
          </linearGradient>
        </defs>
        <path
          d="M240.300 200.400a93.730 93.730 0 0 1-10.540 4.710 101.870 101.870 0 0 1-35.900 6.460c-47.320 0-88.540-32.550-88.540-74.320A31.480 31.480 0 0 1 121.750 109.900c-42.800 1.800-53.800 46.400-53.800 72.530 0 73.880 68.090 81.370 82.760 81.370 7.910 0 19.840-2.300 27-4.560l1.310-.44a128.340 128.340 0 0 0 66.600-52.800 4 4 0 0 0-5.320-5.640z"
          fill="url(#edge-a)"
        />
        <path
          d="M110.340 246.340A79.200 79.200 0 0 1 87.600 225a80.720 80.720 0 0 1 29.530-120c3.120-1.470 8.450-4.130 15.540-4a32.350 32.350 0 0 1 25.690 13 31.880 31.880 0 0 1 6.360 18.660c0-.21 24.460-79.600-80-79.600-43.900 0-80 41.660-80 78.210a130.150 130.150 0 0 0 12.110 56 128 128 0 0 0 156.380 67.110 75.550 75.550 0 0 1-62.780-8z"
          fill="url(#edge-b)"
        />
        <path
          d="M156.940 153.780c-.81 1.050-3.300 2.500-3.300 5.660 0 2.610 1.700 5.120 4.720 7.230 14.380 10 41.490 8.680 41.560 8.680a59.560 59.560 0 0 0 30.270-8.350 61.380 61.380 0 0 0 30.430-52.880c.26-22.410-8-37.310-11.340-43.910C228.090 28.760 182.350 4.920 132.610 4.920a128 128 0 0 0-128 126.200c.48-36.540 36.800-66.050 80-66.050 3.500 0 23.460.34 42 10.070 16.340 8.580 24.900 18.940 30.850 29.210 6.180 10.670 7.280 24.150 7.280 29.520s-2.740 13.330-7.800 19.910z"
          fill="url(#edge-c)"
        />
      </svg>
    ),
  },
  {
    name: 'PowerPoint',
    icon: (
      <svg width="42" height="38" viewBox="0 0 42 38">
        <circle cx="23" cy="19" r="18.500" fill="#ed6c47" />
        <path d="M23 .5A18.500 18.500 0 0 1 41.500 19H23Z" fill="#ff8f6b" />
        <path d="M4.500 19H41.500A18.500 18.500 0 0 1 4.500 19Z" fill="#d35230" />
        <OfficeBadge letter="P" color="#c43e1c" />
      </svg>
    ),
  },
  {
    name: 'File Explorer',
    open: true,
    icon: (
      <svg width="38" height="32" viewBox="0 0 38 32">
        <path d="M0 2A2 2 0 0 1 2 0H15L18 4V8H0Z" fill="#dfa012" />
        <path d="M0 6H15L18 3H38V30H0Z" fill="#fcd462" />
        <path d="M7 32V18A2 2 0 0 1 9 16H29A2 2 0 0 1 31 18V32H25V22H13V32Z" fill="#3f97e0" />
        <path d="M13 24H25V30H13Z" fill="#f5b91f" />
      </svg>
    ),
  },
  {
    name: 'Word',
    open: true,
    stacked: true,
    icon: (
      <svg width="42" height="38" viewBox="0 0 42 38">
        <path d="M10 0H41V10H10Z" fill="#41a5ee" />
        <path d="M10 10H41V19H10Z" fill="#2b7cd3" />
        <path d="M10 19H41V28H10Z" fill="#185abd" />
        <path d="M10 28H41V38H10Z" fill="#103f91" />
        <OfficeBadge letter="W" color="#185abd" />
      </svg>
    ),
  },
  {
    name: 'Excel',
    open: true,
    icon: (
      <svg width="42" height="38" viewBox="0 0 42 38">
        <path d="M10 0H41V10H10Z" fill="#21a366" />
        <path d="M26 0H41V10H26Z" fill="#33c481" />
        <path d="M10 10H41V19H10Z" fill="#107c41" />
        <path d="M26 10H41V19H26Z" fill="#21a366" />
        <path d="M10 19H41V38H10Z" fill="#185c37" />
        <path d="M26 19H41V28H26Z" fill="#107c41" />
        <OfficeBadge letter="X" color="#107c41" />
      </svg>
    ),
  },
  {
    name: 'Chrome',
    open: true,
    icon: (
      <svg width="40" height="40" viewBox="-20 -20 40 40">
        <path d="M-17.320-10A20 20 0 0 1 17.320-10L0-10A10 10 0 0 0-8.660 5Z" fill="#db4437" />
        <path d="M-17.320-10A20 20 0 0 1 17.320-10L0-10A10 10 0 0 0-8.660 5Z" fill="#ffcd40" transform="rotate(120)" />
        <path d="M-17.320-10A20 20 0 0 1 17.320-10L0-10A10 10 0 0 0-8.660 5Z" fill="#0f9d58" transform="rotate(240)" />
        <circle r="9.500" fill="#f1f1f1" />
        <circle r="7.500" fill="#4285f4" />
      </svg>
    ),
  },
  { name: 'Outlook', icon: <OutlookIcon /> },
  { name: 'Outlook inbox', open: true, icon: <OutlookIcon /> },
  {
    name: 'Telegram',
    open: true,
    icon: (
      <svg width="46" height="46" viewBox="-2 0 46 46">
        <circle cx="20" cy="21" r="19" fill="#35a3dc" />
        <path d="M7 21 30 11 26 31 19 27 16 31 15 25Z" fill="#fff" />
        <path d="M15 25 26 15 18 27 16 31Z" fill="#c6dcec" />
        <circle cx="31" cy="33" r="12.500" fill="#8e8e8e" />
        <text x="31" y="39" fontSize="16" fill="#fff" textAnchor="middle">65</text>
      </svg>
    ),
  },
];

function Taskbar() {
  return (
    <footer className="flex h-[70px] items-stretch bg-linear-to-r from-[#12302f] via-[#24342e] to-[#12302c] text-white">
      <button type="button" aria-label="Start" className="flex w-[84px] shrink-0 items-center justify-center">
        <svg width="24" height="24" viewBox="0 0 24 24" fill="#fff">
          <path d="M0 3.500 10 2V11.500H0ZM11 1.800 24 0V11.500H11ZM0 12.500H10V22L0 20.500ZM11 12.500H24V24L11 22.200Z" />
        </svg>
      </button>
      <label className="flex w-[602px] items-center gap-[22px] border-2 border-[#c3c3c3] bg-[#f2f4f3] pl-5">
        <svg width="32" height="32" viewBox="0 0 32 32" fill="none" stroke="#000" strokeWidth="2.200">
          <circle cx="20.500" cy="11" r="10" />
          <path d="M13.500 18.500 1 31" />
        </svg>
        <input
          aria-label="Search"
          placeholder="Type here to search"
          className="min-w-0 flex-1 pt-1 text-[25px] outline-none placeholder:text-[#2b2b2b]"
        />
      </label>
      <button type="button" aria-label="Cortana" className="flex w-[84px] shrink-0 items-center justify-center">
        <svg width="30" height="30" viewBox="0 0 30 30" fill="none">
          <circle cx="15" cy="15" r="13.500" stroke="#8c9692" strokeWidth="3" />
          <circle cx="15" cy="15" r="11.800" stroke="#fff" strokeWidth="2.800" />
        </svg>
      </button>
      <button type="button" aria-label="Task view" className="flex w-[84px] shrink-0 items-center justify-center">
        <svg width="30" height="28" viewBox="0 0 30 28" fill="none" stroke="#fff" strokeWidth="1.300">
          <path d="M1 0V5H20V0M1 8H20V20H1ZM1 28V23H20V28M27.500 0V7M27.500 13V28" />
          <path d="M26 8.500H29V11.500H26Z" fill="#fff" stroke="none" />
        </svg>
      </button>
      <span className="mr-[17px] ml-2 h-[46px] w-[6px] self-center border-x border-[#53625c]" />
      {taskApps.map((app) => (
        <button
          key={app.name}
          type="button"
          aria-label={app.name}
          className={clsx('relative flex w-[66px] shrink-0 items-center justify-center', app.active && 'bg-[#157878]')}
        >
          {app.icon}
          {app.active && <span className="absolute inset-x-0 bottom-0 h-1 bg-[#9de5e8]" />}
          {app.open && !app.stacked && <span className="absolute inset-x-2 bottom-0 h-1 bg-[#9de5e8]" />}
          {app.stacked && (
            <span className="absolute inset-x-2 bottom-0 flex h-1 gap-[2px]">
              <span className="flex-1 bg-[#9de5e8]" />
              <span className="w-[14px] bg-[#74aca9]" />
            </span>
          )}
        </button>
      ))}
      <div className="ml-auto flex shrink-0">
        <button type="button" aria-label="Get help" className="flex w-[67px] items-center justify-center">
          <svg width="42" height="38" viewBox="0 0 42 38">
            <circle cx="19" cy="19" r="17" fill="#1590d0" stroke="#fff" strokeWidth="3" />
            <path d="M13 14C13 6 25 6 25 13.500 25 18 19 18 19 23.500" fill="none" stroke="#fff" strokeWidth="3.600" />
            <circle cx="19" cy="29" r="2.200" fill="#fff" />
            <circle cx="33" cy="28" r="9" fill="#f2a922" />
            <path d="M33 26V33.500M33 22V24.500" stroke="#fff" strokeWidth="2.600" />
          </svg>
        </button>
        <button type="button" aria-label="Show hidden icons" className="flex w-[30px] items-center">
          <svg width="18" height="12" viewBox="0 0 18 12" fill="none" stroke="#fff" strokeWidth="1.500">
            <path d="M1 11 9 1.500 17 11" />
          </svg>
        </button>
        <button type="button" aria-label="Dropbox" className="flex w-[43px] items-center justify-center">
          <svg width="28" height="26" viewBox="0 0 28 26">
            <path d="M1 4 7.500 0 14 4 7.500 8ZM14 4 20.500 0 27 4 20.500 8ZM14 12.500 20.500 8.500 27 12.500 20.500 16.500ZM14 18 20.500 18 17 21.500Z" fill="#fff" />
            <rect x="0" y="10" width="15" height="16" rx="2" fill="#d3102e" />
            <text x="7.500" y="23" fontSize="14" fontWeight="600" fill="#fff" textAnchor="middle">1</text>
          </svg>
        </button>
        <button type="button" aria-label="Network" className="flex w-[42px] items-center justify-center">
          <svg width="28" height="22" viewBox="0 0 28 22" fill="none" stroke="#fff" strokeWidth="1.200">
            <path d="M7 1H27V16H4M15 16V20M10 20.500H20M1 1H7V9H1ZM4 9V20M1 4H7M8 20H4" />
          </svg>
        </button>
        <button type="button" aria-label="Volume" className="flex w-[42px] items-center justify-center">
          <svg width="28" height="22" viewBox="0 0 28 22" fill="none" stroke="#fff" strokeWidth="1.300">
            <path d="M1 7H5L11 1.500V20.500L5 15H1Z" />
            <path d="M14.500 7.500C16 9.500 16 12.500 14.500 14.500M18.500 4.500C21.500 8 21.500 14 18.500 17.500M22.500 1.500C27.500 7 27.500 15 22.500 20.500" />
          </svg>
        </button>
        <div className="w-[116px] pt-1 text-center text-[20px] leading-[32px]">
          <div>6:16 AM</div>
          <div>10/3/2020</div>
        </div>
        <button type="button" aria-label="Notifications" className="relative flex w-[84px] items-center pl-5">
          <svg width="28" height="28" viewBox="0 0 28 28">
            <path d="M0 0H28V22H14L8 28V22H0Z" fill="#fff" />
            <path d="M6 6.500H22M6 11H22M6 15.500H16" stroke="#1c332e" strokeWidth="1.500" />
          </svg>
          <span className="absolute top-[33px] left-[29px] flex h-[28px] w-[34px] items-center justify-center rounded-full border border-[#6fb0ab] bg-[#147572] text-[19px] leading-none font-semibold">
            23
          </span>
        </button>
        <span className="w-2 border-l-2 border-[#7e8c88]" />
      </div>
    </footer>
  );
}

export default function App() {
  return (
    <div className="flex min-h-screen flex-col overflow-hidden bg-white font-['Open_Sans','Noto_Sans',sans-serif]">
      <BrowserTabs />
      <AddressBar />
      <ExcelHeader />
      <RibbonTabs />
      <Ribbon />
      <FormulaBar />
      <Sheet />
      <SheetTabs />
      <StatusBar />
      <Taskbar />
    </div>
  );
}
